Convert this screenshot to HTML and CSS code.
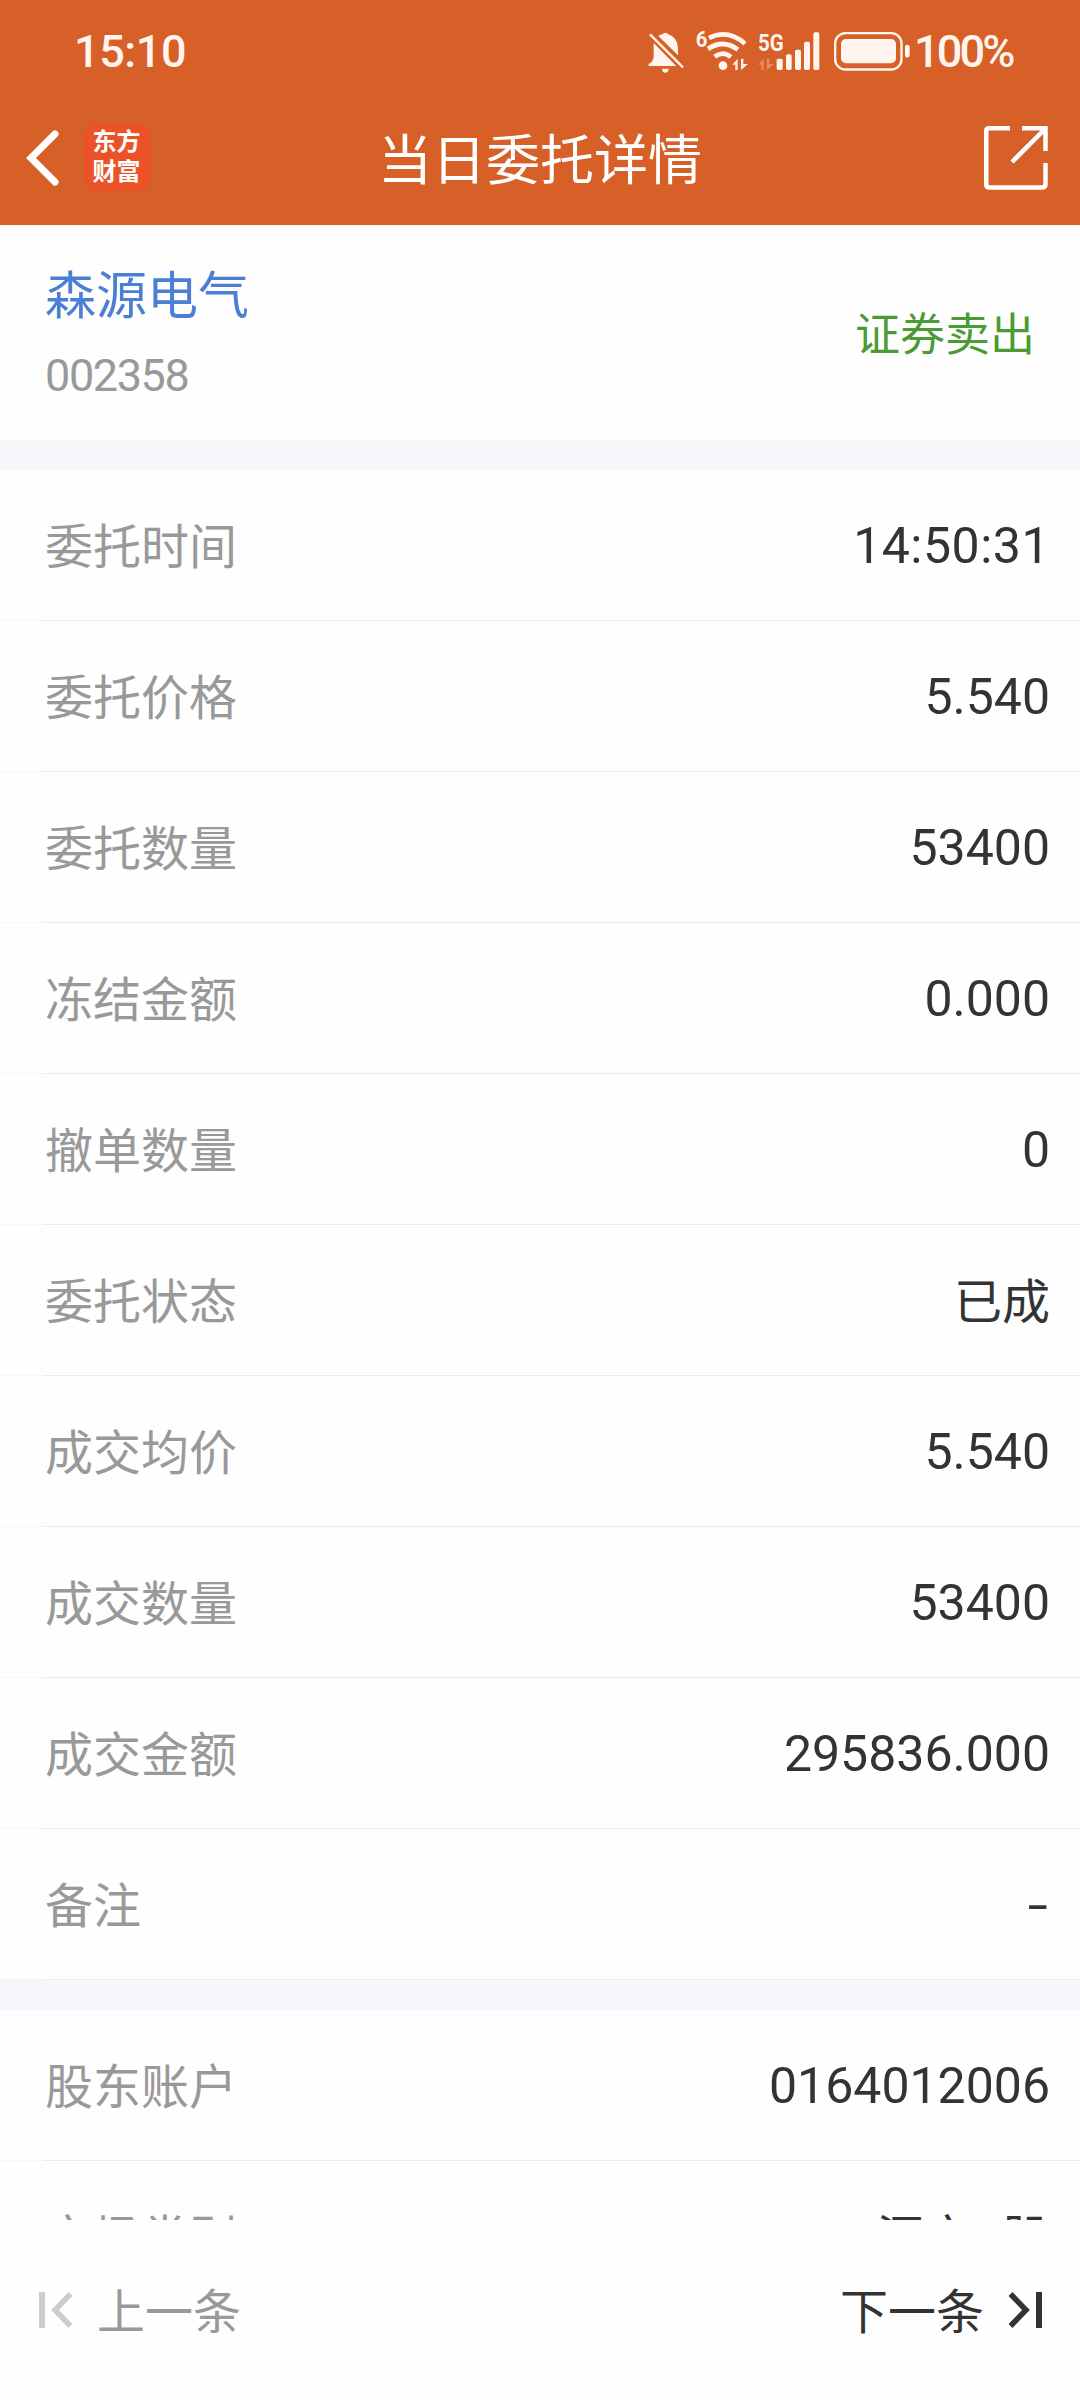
FILE: index.html
```html
<!DOCTYPE html>
<html lang="zh-CN">
<head>
<meta charset="utf-8">
<title>当日委托详情</title>
<link rel="stylesheet" href="styles.css">
</head>
<body>
<div class="screen">
  <header class="header">
    <div class="status">
      <span class="clock">15:10</span>
      <div class="status-right">
        <svg class="status-icons" viewBox="84 58 789 132" fill="#fff5ee" aria-hidden="true">
          <path d="M101 97 L169 166 H86 V160 Q100 152 101 138 Z"/>
          <path d="M115 76 Q121 72 127 71 Q136 62 145 71 Q174 80 174 114 V134 Z"/>
          <path d="M126 174 H146 Q145 186 136 186 Q127 186 126 174 Z"/>
          <path d="M90 71 L189 170" fill="none" stroke="#fff5ee" stroke-width="7"/>
          <text class="tiny" x="227" y="109" font-size="67" textLength="35" lengthAdjust="spacingAndGlyphs">6</text>
          <g fill="none" stroke="#fff5ee" stroke-width="14">
            <path d="M267 82 Q323 54 375 99"/>
            <path d="M264 115 Q309 84 354 117"/>
            <path d="M284 138 Q309 119 333 139"/>
          </g>
          <circle cx="309" cy="165" r="13"/>
          <path d="M337 162 L353 144 V178 H346 V162 Z M363 144 H370 V160 H384 L363 178 Z"/>
          <text class="tiny" x="414" y="121" font-size="74" textLength="77" lengthAdjust="spacingAndGlyphs">5G</text>
          <path fill="#e98a62" d="M415 162 L431 144 V178 H424 V162 Z M441 144 H448 V160 H462 L441 178 Z"/>
          <rect x="470" y="144" width="18" height="34" rx="5"/>
          <rect x="498" y="131" width="17" height="47" rx="5"/>
          <rect x="525" y="117" width="18" height="61" rx="5"/>
          <rect x="552" y="93" width="18" height="85" rx="5"/>
          <rect x="580" y="65" width="18" height="113" rx="5"/>
          <rect x="645.500" y="67.500" width="199" height="109" rx="31" fill="none" stroke="#fff5ee" stroke-width="7"/>
          <rect x="663" y="85" width="165" height="73" rx="15"/>
          <rect x="855" y="102" width="14" height="39" rx="7"/>
        </svg>
        <span class="battery-text">100%</span>
      </div>
    </div>
    <nav class="navbar">
      <div class="nav-left">
        <svg class="back" viewBox="0 0 34 56"><path d="M29 4 L5 28 L29 52" fill="none" stroke="#fff" stroke-width="7" stroke-linecap="round" stroke-linejoin="miter"/></svg>
        <div class="logo"><span>东方</span><span>财富</span></div>
      </div>
      <h1 class="title">当日委托详情</h1>
      <svg class="share" viewBox="0 0 64 64" fill="none" stroke="#fff" stroke-width="4.500"><path d="M26 2.250 H5 Q2.250 2.250 2.250 5 V58 Q2.250 61.500 5 61.500 H58 Q61.500 61.500 61.500 58 V37"/><path d="M38 2.250 H61.500 V25 M61 3 L28 36"/></svg>
    </nav>
  </header>

  <main class="content">
    <section class="stock">
      <div class="stock-id">
        <div class="stock-name">森源电气</div>
        <div class="stock-code">002358</div>
      </div>
      <div class="side">证券卖出</div>
    </section>
    <section class="group">
      <div class="row"><span>委托时间</span><b class="time">14:50:31</b></div>
      <div class="row"><span>委托价格</span><b>5.540</b></div>
      <div class="row"><span>委托数量</span><b>53400</b></div>
      <div class="row"><span>冻结金额</span><b>0.000</b></div>
      <div class="row"><span>撤单数量</span><b>0</b></div>
      <div class="row"><span>委托状态</span><b class="cjk">已成</b></div>
      <div class="row"><span>成交均价</span><b>5.540</b></div>
      <div class="row"><span>成交数量</span><b>53400</b></div>
      <div class="row"><span>成交金额</span><b>295836.000</b></div>
      <div class="row"><span>备注</span><b class="dash">-</b></div>
    </section>
    <section class="group">
      <div class="row"><span>股东账户</span><b>0164012006</b></div>
      <div class="row"><span>市场类别</span><b class="cjk">深市A股</b></div>
    </section>
  </main>

  <footer class="pager">
    <div class="prev">
      <svg viewBox="0 0 34 36" fill="none" stroke="#ccc"><path d="M3 0 V36" stroke-width="6"/><path d="M31.500 2 L16 18 L31.500 34" stroke-width="5.500"/></svg>
      <span>上一条</span>
    </div>
    <div class="next">
      <span>下一条</span>
      <svg viewBox="0 0 34 36" fill="none" stroke="#333"><path d="M31 0 V36" stroke-width="6"/><path d="M2.500 2 L18 18 L2.500 34" stroke-width="5.500"/></svg>
    </div>
  </footer>
</div>
</body>
</html>
```
FILE: styles.css
```css
* { box-sizing: border-box; }

body {
  margin: 0;
  background: #fefefe;
  font-family: Roboto, "Noto Sans CJK SC", sans-serif;
}

.screen {
  display: flex;
  flex-direction: column;
  width: 1080px;
  height: 2400px;
  overflow: hidden;
}

.header {
  flex: none;
  height: 225px;
  background: #d75f28;
  color: #fff;
}

.status {
  display: flex;
  justify-content: space-between;
  align-items: center;
  height: 92px;
  padding: 11px 66px 0 74px;
  color: #fff5ee;
}

.clock,
.battery-text {
  font-size: 45px;
  font-weight: 500;
  line-height: 1;
}

.clock { letter-spacing: -0.4px; }

.status-right {
  display: flex;
  align-items: center;
  gap: 3px;
  height: 64px;
}

.status-icons { width: 263px; height: 44px; overflow: visible; }
.battery-text { width: 100px; letter-spacing: -2.8px; white-space: nowrap; }
.tiny { font-family: Roboto, sans-serif; font-weight: 700; }

.navbar {
  display: grid;
  grid-template-columns: 1fr auto 1fr;
  align-items: center;
  height: 131px;
  padding: 0 32px 0 26px;
}

.nav-left { display: flex; align-items: center; gap: 24px; }
.back { width: 34px; height: 56px; }

.logo {
  display: flex;
  flex-direction: column;
  align-items: center;
  width: 67px;
  height: 67px;
  padding: 1px 2px 0 0;
  border-radius: 14px;
  background: #ec5228;
  font-family: "Noto Sans CJK SC", sans-serif;
  font-size: 24px;
  font-weight: 700;
  line-height: 30px;
}

.title {
  margin: 0;
  padding: 0 0 2px 6px;
  font-family: "Noto Sans CJK SC", sans-serif;
  font-size: 54px;
  font-weight: 400;
  line-height: 80px;
}

.share { justify-self: end; width: 64px; height: 64px; }

.content {
  flex: 1;
  min-height: 0;
  overflow: hidden;
  background: #f6f7fa;
}

.stock {
  display: flex;
  justify-content: space-between;
  align-items: center;
  height: 215px;
  padding: 0 45px;
  background: #fefefe;
}

.stock-id { padding-top: 4px; }

.stock-name {
  color: #4a7fd3;
  font-family: "Noto Sans CJK SC", sans-serif;
  font-size: 51px;
  line-height: 78px;
}

.stock-code {
  padding-top: 5px;
  color: #999;
  font-size: 45px;
  line-height: 80px;
  letter-spacing: -1.4px;
}

.side {
  padding-bottom: 3px;
  color: #4b9b35;
  font-family: "Noto Sans CJK SC", sans-serif;
  font-size: 45px;
}

.group { margin-top: 30px; background: #fefefe; }

.row {
  display: flex;
  justify-content: space-between;
  align-items: center;
  height: 151px;
  padding: 0 30px 0 45px;
  border-bottom: 1px solid;
  border-image: linear-gradient(to right, #f7f7f7 45px, #ebebeb 45px) 1;
}

.row span {
  padding-bottom: 5px;
  color: #999;
  font-family: "Noto Sans CJK SC", sans-serif;
  font-size: 48px;
  line-height: 70px;
}

.row b {
  padding-top: 1px;
  color: #333;
  font-size: 50px;
  font-weight: 400;
  line-height: 70px;
}

.row .time { letter-spacing: 0.5px; }
.row .cjk { padding: 0 0 5px; font-family: "Noto Sans CJK SC", sans-serif; font-size: 48px; }
.row .dash { margin-right: 2px; transform: scaleX(1.45); transform-origin: right; }

.pager {
  flex: none;
  display: flex;
  justify-content: space-between;
  align-items: center;
  height: 180px;
  padding: 0 38px 0 39px;
  background: #fefefe;
  font-family: "Noto Sans CJK SC", sans-serif;
  font-size: 48px;
}

.prev, .next { display: flex; align-items: center; gap: 24px; }
.prev { color: #999; }
.next { color: #333; }
.pager span { padding-bottom: 5px; }
.pager svg { width: 34px; height: 36px; }
```
